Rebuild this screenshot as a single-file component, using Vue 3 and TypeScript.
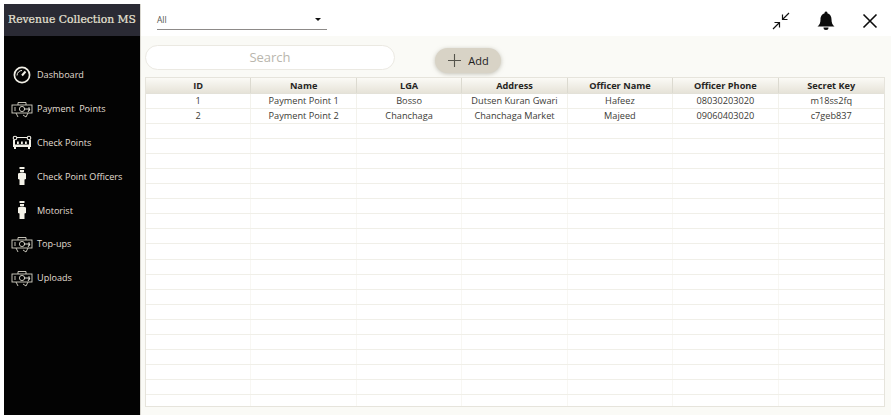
<script setup lang="ts">
type IconName = 'gauge' | 'money' | 'sofa' | 'officer'
const menu: { label: string; icon: IconName }[] = [
  { label: 'Dashboard', icon: 'gauge' },
  { label: 'Payment  Points', icon: 'money' },
  { label: 'Check Points', icon: 'sofa' },
  { label: 'Check Point Officers', icon: 'officer' },
  { label: 'Motorist', icon: 'officer' },
  { label: 'Top-ups', icon: 'money' },
  { label: 'Uploads', icon: 'money' },
]
const columns = ['ID', 'Name', 'LGA', 'Address', 'Officer Name', 'Officer Phone', 'Secret Key']
const rows = [
  ['1', 'Payment Point 1', 'Bosso', 'Dutsen Kuran Gwari', 'Hafeez', '08030203020', 'm18ss2fq'],
  ['2', 'Payment Point 2', 'Chanchaga', 'Chanchaga Market', 'Majeed', '09060403020', 'c7geb837'],
]
const emptyRows = Array.from({ length: 19 }, (_, i) => i)
</script>

<template>
  <div class="page">
    <aside class="sidebar">
      <div class="brand">Revenue Collection MS</div>
      <nav class="menu">
        <div v-for="item in menu" :key="item.label" class="menu-item">
          <span class="icon-box">
            <svg v-if="item.icon === 'gauge'" width="20" height="20" viewBox="0 0 20 20" fill="none" stroke="#f1efe6" stroke-width="1.7">
              <circle cx="10" cy="10" r="7.6" />
              <path d="M10 10.5 13.5 6.5" stroke-width="2" />
              <path d="M5 10.5a5 5 0 0 1 5-5" stroke-width="1" />
            </svg>
            <svg v-else-if="item.icon === 'money'" width="22" height="18" viewBox="0 0 22 18" fill="none" stroke="#d8d5c8" stroke-width=".9">
              <rect x="1" y="5" width="20" height="8" />
              <circle cx="11" cy="9" r="2.6" />
              <path d="M7 5V2.500h8V5M4 7v4M18 7v4M5 13l2 4M17 13l-2 4l-3-2" />
              <path d="M13 9h6l-2 3" stroke="#f1efe6" />
            </svg>
            <svg v-else-if="item.icon === 'sofa'" width="20" height="14" viewBox="0 0 20 14" fill="#f1efe6">
              <circle cx="3" cy="3" r="1.800" fill="none" stroke="#f1efe6" stroke-width="1.100" />
              <circle cx="17" cy="3" r="1.800" fill="none" stroke="#f1efe6" stroke-width="1.100" />
              <path d="M5 2h10v1H5ZM1 5h2v6H1ZM17 5h2v6h-2Z" />
              <path d="M5 6.500h1.800v2.500H5ZM9 6.500h1.800v2.500H9ZM13 6.500h1.800v2.500H13Z" />
              <path d="M1 9.500h18V12H1ZM2 12h2v2H2ZM16 12h2v2h-2Z" />
            </svg>
            <svg v-else width="10" height="20" viewBox="0 0 10 20" fill="#f4f2e8">
              <path d="M2.500 1h5v2h-5ZM3 4h4v2H3Z" />
              <path d="M1 7.500 4 6.500h2l3 1V13L7.500 13.500V19h-5v-5.500L1 13Z" />
            </svg>
          </span>
          <span class="menu-label">{{ item.label }}</span>
        </div>
      </nav>
    </aside>

    <main class="content">
      <header class="topbar">
        <div class="select">
          <span>All</span>
          <i class="caret"></i>
        </div>
        <div class="actions">
          <svg width="20" height="20" viewBox="0 0 20 20" fill="none" stroke="#111" stroke-width="1.200">
            <path d="M18 2 11.500 8.500M11.500 3.500v5h5M2 18l6.500-6.500M3.500 11.500h5v5" />
          </svg>
          <svg width="20" height="20" viewBox="0 0 20 20" fill="#0c0c0c">
            <path d="M10 .5a1.400 1.400 0 0 1 1.400 1.700C14.500 3 15.500 6 15.500 8.500c0 3.500 1 5.500 3 7h-17c2-1.500 3-3.500 3-7 0-2.500 1-5.500 4.100-6.300A1.400 1.400 0 0 1 10 .5Z" />
            <path d="M7.500 16.500h5a2.500 2.500 0 0 1-5 0Z" />
          </svg>
          <svg width="18" height="18" viewBox="0 0 18 18" fill="none" stroke="#0c0c0c" stroke-width="1.600">
            <path d="M2.500 2.500 15.500 15.500M15.500 2.500 2.500 15.500" />
          </svg>
        </div>
      </header>

      <section class="body">
        <div class="tools">
          <div class="search">Search</div>
          <button class="add" type="button">
            <svg width="15" height="15" viewBox="0 0 15 15" fill="none" stroke="#55544c" stroke-width="1.100">
              <path d="M7.500 1v13M1 7.500h13" />
            </svg>
            <span>Add</span>
          </button>
        </div>

        <div class="table">
          <div class="row head">
            <div v-for="c in columns" :key="c" class="cell">{{ c }}</div>
          </div>
          <div v-for="r in rows" :key="r[0]" class="row">
            <div v-for="(v, i) in r" :key="i" class="cell">{{ v }}</div>
          </div>
          <div v-for="n in emptyRows" :key="n" class="row empty">
            <div v-for="c in columns" :key="c" class="cell"></div>
          </div>
        </div>
      </section>
    </main>
  </div>
</template>

<style>
html, body { margin: 0; background: #fff; }
</style>

<style scoped>
.page {
  width: 891px;
  height: 417px;
  display: flex;
  box-sizing: border-box;
  padding: 4px 0 2px 4px;
  font-family: "Open Sans", "Noto Sans", sans-serif;
  overflow: hidden;
}
.sidebar {
  width: 136px;
  flex: none;
  background: #030303;
  border-right: 1px solid #d9d7d0;
  display: flex;
  flex-direction: column;
}
.brand {
  height: 32px;
  background: #2a2a34;
  color: #e8e4d6;
  font-family: "DejaVu Serif", serif;
  font-size: 10.800px;
  line-height: 32px;
  text-align: center;
  white-space: nowrap;
  -webkit-text-stroke: .2px #e8e4d6;
}
.menu {
  padding-top: 22px;
  display: flex;
  flex-direction: column;
  gap: 0;
}
.menu-item {
  height: 33.800px;
  display: flex;
  align-items: center;
  color: #e2dfd3;
  font-size: 9.100px;
  white-space: pre;
}
.icon-box {
  width: 33px;
  flex: none;
  display: flex;
  justify-content: center;
  padding-left: 3px;
  box-sizing: border-box;
}
.content {
  flex: 1;
  display: flex;
  flex-direction: column;
  min-width: 0;
}
.topbar {
  height: 32px;
  flex: none;
  background: #fff;
  display: flex;
  align-items: center;
  justify-content: space-between;
  padding: 0 12px 0 16px;
}
.select {
  width: 170px;
  height: 19px;
  margin-top: 1px;
  box-sizing: border-box;
  border-bottom: 1px solid #8d8a88;
  display: flex;
  align-items: center;
  justify-content: space-between;
  padding: 0 6px 2px 0;
  font-size: 8.500px;
  color: #55544f;
}
.caret {
  width: 0;
  height: 0;
  border: 3px solid transparent;
  border-top: 3px solid #111;
  border-bottom: 0;
}
.actions {
  display: flex;
  align-items: center;
  gap: 25px;
  margin-top: 1px;
}
.body {
  flex: 1;
  background: #fafaf6;
  padding: 9px 6px 8px 4px;
  display: flex;
  flex-direction: column;
  min-height: 0;
}
.tools {
  height: 32px;
  flex: none;
  display: flex;
  align-items: flex-start;
}
.search {
  width: 250px;
  height: 25px;
  box-sizing: border-box;
  border: 1px solid #ebe9e2;
  border-radius: 13px;
  background: #fff;
  color: #b9b6ad;
  font-size: 13px;
  line-height: 23px;
  text-align: center;
}
.add {
  margin: 3px 0 0 40px;
  width: 66px;
  height: 25px;
  border: 0;
  border-radius: 13px;
  background: #d8d3c6;
  box-shadow: 0 1px 4px rgba(150, 145, 130, .55);
  color: #22211d;
  font-family: inherit;
  font-size: 11px;
  display: flex;
  align-items: center;
  justify-content: center;
  gap: 6px;
  padding: 0;
}
.table {
  flex: 1;
  width: 740px;
  box-sizing: border-box;
  background: #fff;
  border: 1px solid #e6e4dc;
  overflow: hidden;
}
.row {
  display: grid;
  grid-template-columns: repeat(7, 1fr);
  height: 15.050px;
  box-sizing: border-box;
  border-bottom: 1px solid #f0efe8;
}
.row.head {
  height: 16px;
  background: linear-gradient(#fbfaf6, #e6e3d8);
  border-bottom: 1px solid #e3e1d8;
}
.cell {
  border-right: 1px solid #f3f2ec;
  font-size: 9.200px;
  line-height: 13px;
  text-align: center;
  color: #3c3b36;
  white-space: nowrap;
}
.row.empty .cell { border-right-color: #f8f7f3; }
.row.head .cell {
  font-weight: 700;
  font-size: 9.200px;
  line-height: 15px;
  color: #26251f;
  border-right-color: #dcdad0;
}
.cell:last-child { border-right: 0; }
</style>
